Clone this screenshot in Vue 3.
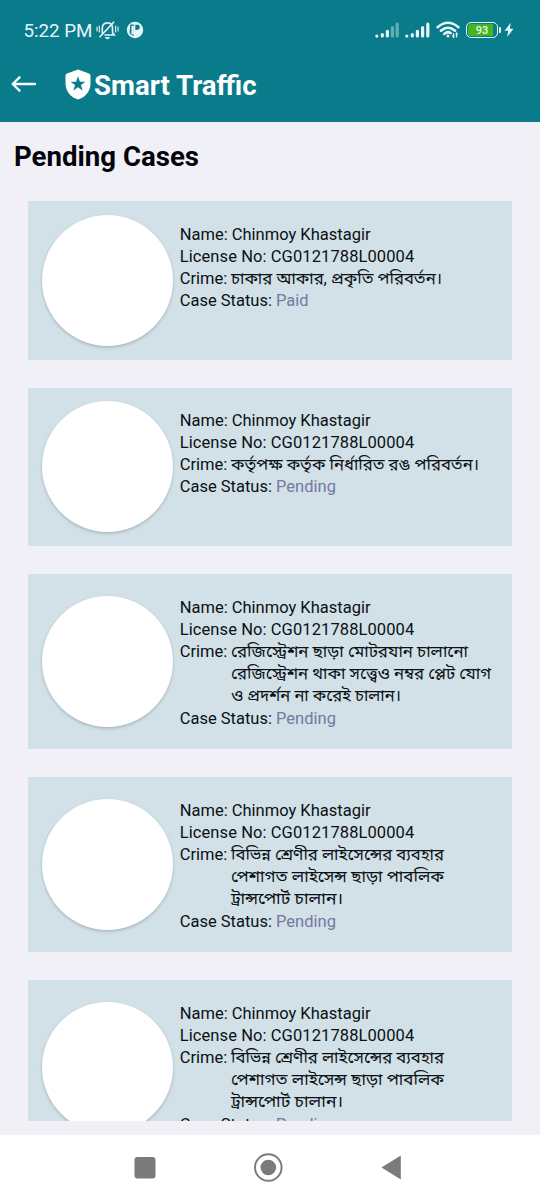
<script setup>
const paid = 'Paid'
const pending = 'Pending'
const transport = [
  { t: 'বিভিন্ন শ্রেণীর লাইসেন্সের ব্যবহার', w: 213 },
  { t: 'পেশাগত লাইসেন্স ছাড়া পাবলিক', w: 213 },
  { t: 'ট্রান্সপোর্ট চালান।', w: 112 },
]
const cases = [
  { h: 158.5, status: paid, crime: [{ t: 'চাকার আকার, প্রকৃতি পরিবর্তন।', w: 211 }] },
  { h: 158.5, status: pending, crime: [{ t: 'কর্তৃপক্ষ কর্তৃক নির্ধারিত রঙ পরিবর্তন।', w: 248 }] },
  {
    h: 175,
    status: pending,
    crime: [
      { t: 'রেজিস্ট্রেশন ছাড়া মোটরযান চালানো', w: 237 },
      { t: 'রেজিস্ট্রেশন থাকা সত্ত্বেও নম্বর প্লেট যোগ', w: 260 },
      { t: 'ও প্রদর্শন না করেই চালান।', w: 170 },
    ],
  },
  { h: 175, status: pending, crime: transport },
  { h: 175, status: pending, crime: transport },
]
</script>

<template>
  <div class="screen">
    <header class="top">
      <div class="status">
        <span class="clock">5:22 PM</span>
        <svg class="bell" width="23" height="20" viewBox="0 0 23 20" fill="none" stroke="#e4f6f7" stroke-width="1.6" stroke-linecap="round">
          <path d="M6.3 13.3V8.2Q6.3 3.2 11.5 2.7Q16.5 3.2 16.5 8.2V12.5L18.3 15H9" />
          <path d="M4 16.8L17.6 2.2" />
          <path d="M1 7v4M3.3 6v6M19.6 6v6M22 7v4" stroke-width="1.1" />
          <path d="M9.5 17.7h4Q11.5 20 9.5 17.7Z" fill="#e4f6f7" stroke-width="1" />
        </svg>
        <svg class="pbadge" width="18" height="18" viewBox="0 0 18 18">
          <circle cx="9" cy="9" r="8.2" fill="#e4f6f7" />
          <path d="M4.2 3.6H7.9V14.8Q4.8 14.6 3.6 12ZM9.3 3.8H12.4Q14.2 4.6 13.7 7.3Q13 9.3 9.3 9Z" fill="#0a7b8b" />
          <path d="M5.4 4.8H7.9V13.4H5.4Z" fill="#e4f6f7" />
        </svg>
        <div class="spacer"></div>
        <svg class="sig" width="24" height="16" viewBox="0 0 24 16" stroke="#e4f6f7" stroke-width="3.2" stroke-linecap="round">
          <path d="M1.8 14v.1M7.3 12.5V14M12.4 9.3V14" />
          <path d="M17.4 5.5V14M22.2 2.2V14" opacity=".42" />
        </svg>
        <svg class="sig2" width="25" height="16" viewBox="0 0 25 16" stroke="#e4f6f7" stroke-width="3.2" stroke-linecap="round">
          <path d="M1.8 14v.1M7.3 12.5V14M12.4 9.3V14M17.6 5.5V14M22.8 2.2V14" />
        </svg>
        <svg class="wifi" width="24" height="18" viewBox="0 0 24 18" fill="none" stroke="#e4f6f7" stroke-width="2.5" stroke-linecap="round">
          <path d="M1.6 6.3Q12-2.8 22.4 6.3M4.9 9.8Q12 3.6 19.1 9.8M8.2 13Q12 9.7 14.7 12.2" />
          <circle cx="12" cy="15" r="1.5" fill="#e4f6f7" stroke="none" />
          <path d="M17.6 12.8V16.5M20.5 12V15.7" stroke-width="1.4" />
          <path d="M15.7 14.5h2v2.8ZM22.3 14h-2v-2.8Z" fill="#e4f6f7" stroke="none" />
        </svg>
        <div class="battery"><span>93</span></div>
        <i class="nub"></i>
        <svg class="bolt" width="10" height="16" viewBox="0 0 10 16"><path d="M6.8.8L.5 8.7H4.2L3.2 15L9.5 6.8H5.9Z" fill="#e4f6f7" /></svg>
      </div>
      <div class="bar">
        <svg class="back" width="26" height="18" viewBox="0 0 26 18" fill="none" stroke="#f4ffff" stroke-width="2.4" stroke-linecap="round" stroke-linejoin="round">
          <path d="M24 9H2M8.5 2.3L1.7 9L8.5 15.7" />
        </svg>
        <svg class="shield" width="26" height="31" viewBox="0 0 26 31">
          <path d="M13 .4L24 4.6Q25.5 5.2 25.5 6.8V14.5C25.5 22 20.5 28.4 13 30.6C5.5 28.4.5 22 .5 14.5V6.8Q.5 5.2 2 4.6Z" fill="#fff" />
          <path d="M13 7.2L14.9 12.7H20.4L16 16.1L17.6 21.6L13 18.3L8.4 21.6L10 16.1L5.6 12.7H11.1Z" fill="#0a7b8b" />
        </svg>
        <h1>Smart Traffic</h1>
      </div>
    </header>

    <h2>Pending Cases</h2>

    <main class="list">
      <article v-for="(c, i) in cases" :key="i" class="card" :style="{ height: c.h + 'px' }">
        <div class="avatar"></div>
        <div class="info">
          <p>Name: Chinmoy Khastagir</p>
          <p class="license">License No: CG0121788L00004</p>
          <div class="crime">
            <span>Crime:</span>
            <div>
              <svg v-for="l in c.crime" :key="l.t" class="line" width="264" height="22.3">
                <text x="0" y="16" :textLength="l.w" lengthAdjust="spacingAndGlyphs">{{ l.t }}</text>
              </svg>
            </div>
          </div>
          <p>Case Status: <span class="state">{{ c.status }}</span></p>
        </div>
      </article>
    </main>

    <nav class="nav">
      <svg width="540" height="65" viewBox="0 0 540 65" fill="#7b7b7b">
        <rect x="134.5" y="22" width="21" height="21.5" rx="3" />
        <circle cx="268.3" cy="32.5" r="13.3" fill="none" stroke="#7b7b7b" stroke-width="2" />
        <circle cx="268.3" cy="32.5" r="7.8" />
        <path d="M381.5 32.5L400.8 20.5V44.5Z" />
      </svg>
    </nav>
  </div>
</template>

<style>
body {
  background: #f1f0f7;
}
</style>

<style scoped>
.screen {
  width: 540px;
  height: 1200px;
  display: flex;
  flex-direction: column;
  overflow: hidden;
  background: #f1f0f7;
  color: #0a1014;
  font-family: Roboto, "Noto Sans Bengali", "Noto Sans", sans-serif;
}
.top {
  height: 122px;
  flex: none;
  background: #0a7b8b;
}
.status {
  height: 60px;
  padding: 0 26px 0 23.4px;
  display: flex;
  align-items: center;
  color: #e4f6f7;
}
.clock {
  width: 73px;
  font-size: 18.8px;
  white-space: nowrap;
  padding-top: 2px;
}
.pbadge {
  margin-left: 7px;
}
.spacer {
  flex: 1;
}
.sig2 {
  margin-left: 6px;
}
.wifi {
  margin-left: 6px;
}
.battery {
  box-sizing: border-box;
  width: 32px;
  height: 16px;
  margin-left: 6px;
  padding: 1px;
  border: 1.5px solid #e4f6f7;
  border-radius: 5px;
  display: flex;
}
.battery span {
  flex: 1;
  border-radius: 2px;
  background: linear-gradient(90deg, #43b51f 88%, #0a7b8b 88%);
  font-size: 11px;
  font-weight: 500;
  line-height: 13px;
  text-align: center;
}
.nub {
  width: 2px;
  height: 6px;
  margin-left: 1px;
  border-radius: 1px;
  background: #e4f6f7;
}
.bolt {
  margin-left: 3px;
}
.bar {
  height: 48px;
  padding-left: 11px;
  display: flex;
  align-items: center;
}
.shield {
  margin-left: 27.5px;
}
h1 {
  margin: 3px 0 0 3.6px;
  font-size: 27.6px;
  line-height: 32px;
  font-weight: 700;
  color: #fff;
}
h2 {
  flex: none;
  margin: 18.5px 0 28.5px 14px;
  font-size: 27.6px;
  line-height: 32px;
  font-weight: 700;
  color: #04040a;
}
.list {
  height: 920px;
  flex: none;
  margin: 0 28px;
  display: flex;
  flex-direction: column;
  gap: 28px;
  overflow: hidden;
}
.card {
  flex: none;
  display: flex;
  align-items: center;
  background: #d2e0e7;
}
.avatar {
  flex: none;
  width: 131px;
  height: 131px;
  margin-left: 13.7px;
  border-radius: 50%;
  background: #fff;
  box-shadow: 0 1.5px 3px rgba(40, 60, 70, 0.25);
}
.info {
  align-self: flex-start;
  padding-top: 22.7px;
  margin-left: 7px;
  font-size: 16.5px;
  line-height: 22px;
  white-space: nowrap;
}
p {
  margin: 0;
}
.license {
  letter-spacing: 0.09px;
}
.crime {
  display: flex;
}
.crime > span {
  width: 51.3px;
}
.line {
  display: block;
  overflow: visible;
}
.line text {
  font-size: 16px;
  fill: #0a1014;
}
.state {
  color: #7678a2;
}
.nav {
  height: 65px;
  margin-top: auto;
  background: #fff;
}
</style>
